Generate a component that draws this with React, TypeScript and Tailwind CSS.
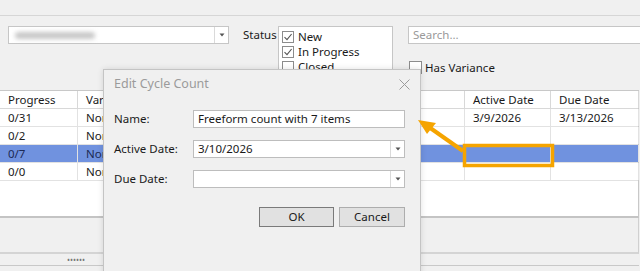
import React from "react";

const font = { fontFamily: '"Noto Sans", "Open Sans", sans-serif' };

function Check({ checked }: { checked: boolean }) {
  return (
    <span className="w-[12px] h-[12px] border border-[#8c8c8c] bg-white flex items-center justify-center shrink-0">
      {checked && (
        <svg width="10" height="10" viewBox="0 0 10 10">
          <path d="M1.5 5.2 L4 7.6 L8.6 2" fill="none" stroke="#555" strokeWidth="1.1" />
        </svg>
      )}
    </span>
  );
}

function Arrow() {
  return (
    <svg width="6" height="4" viewBox="0 0 6 4">
      <path d="M0.5 0.5 L5.5 0.5 L3 3.5 Z" fill="#555" />
    </svg>
  );
}

const cols = [
  { label: "Progress", w: 78 },
  { label: "Variance", w: 92 },
  { label: "Description", w: 140 },
  { label: "Created Date", w: 155 },
  { label: "Active Date", w: 86 },
  { label: "Due Date", w: 88 },
];

const rows = [
  ["0/31", "None", "", "", "3/9/2026", "3/13/2026"],
  ["0/2", "None", "", "", "", ""],
  ["0/7", "None", "", "", "", ""],
  ["0/0", "None", "", "", "", ""],
];

export default function App() {
  return (
    <div className="relative w-[640px] h-[271px] overflow-hidden bg-[#f0f0f0] text-[11.5px] text-[#1a1a1a]" style={font}>
      <div className="h-[16px] border-b border-[#d6d6d6]" />
      <div className="flex items-start pt-[10px] h-[74px] w-[640px] overflow-hidden">
        <div className="ml-[8px] w-[221px] shrink-0 h-[18px] bg-white border border-[#c6c6c6] flex items-center">
          <div className="ml-[6px] w-[80px] h-[7px] rounded-full bg-[#c8c8c8] blur-[2px]" />
          <div className="ml-auto w-[14px] h-full border-l border-[#dadada] flex items-center justify-center">
            <Arrow />
          </div>
        </div>
        <span className="ml-[14px] w-[35px] shrink-0 mt-[1px] leading-[16px]">Status</span>
        <div className="w-[115px] shrink-0 h-[60px] bg-white border border-[#c6c6c6] pl-[3px] pt-[2px] flex flex-col">
          <div className="flex items-center gap-[4px] h-[15px]"><Check checked /><span>New</span></div>
          <div className="flex items-center gap-[4px] h-[15px]"><Check checked /><span>In Progress</span></div>
          <div className="flex items-center gap-[4px] h-[15px]"><Check checked={false} /><span>Closed</span></div>
        </div>
        <div className="ml-[15px] shrink-0 flex flex-col">
          <div className="w-[240px] h-[18px] bg-white border border-[#c6c6c6] flex items-center pl-[4px] text-[#9a9a9a]">Search...</div>
          <div className="flex items-center gap-[3px] mt-[15px] ml-[1px]">
            <span className="w-[13px] h-[13px] border border-[#8c8c8c] bg-white" />
            <span>Has Variance</span>
          </div>
        </div>
      </div>
      <div className="w-[639px] h-[128px] bg-white border-b-[2px] border-[#c4c4c4] border-r border-r-[#c8c8c8] border-t border-t-[#c8c8c8]">
        <div className="flex h-[18px] border-b border-[#d8d8d8]">
          {cols.map((c) => (
            <div key={c.label} className="border-r border-[#d8d8d8] pl-[8px] flex items-center shrink-0" style={{ width: c.w }}>
              {c.label}
            </div>
          ))}
        </div>
        {rows.map((r, i) => (
          <div key={i} className={`flex h-[18px] border-b border-[#e2e2e2] ${i === 2 ? "bg-[#7092df] text-[#1c2a55]" : ""}`}>
            {r.map((v, j) => (
              <div key={j} className="border-r border-[#e2e2e2] pl-[8px] flex items-center shrink-0" style={{ width: cols[j].w }}>
                {v}
              </div>
            ))}
          </div>
        ))}
      </div>
      <div className="w-[639px] h-[36px] border-b-[2px] border-[#d4d4d4] border-r border-r-[#d0d0d0]" />
      <div className="w-[639px] h-[12px] border-b border-[#c8c8c8] flex items-center">
        <span className="ml-[67px] text-[8px] leading-[8px] text-[#777]">••••••</span>
      </div>

      {/* Dialog */}
      <div className="absolute left-[103px] top-[69px] w-[318px] h-[210px] bg-[#f0f0f0] border border-[#c4c4c4] shadow-[0_0_6px_rgba(0,0,0,0.12)]">
        <div className="flex items-center h-[28px] pl-[10px] pr-[10px] text-[12.5px] text-[#9b9b9b]">
          <span>Edit Cycle Count</span>
          <svg className="ml-auto" width="11" height="11" viewBox="0 0 11 11">
            <path d="M0.5 0.5 L10.5 10.5 M10.5 0.5 L0.5 10.5" stroke="#9b9b9b" strokeWidth="1" />
          </svg>
        </div>
        <div className="flex flex-col gap-[12px] mt-[12px] pl-[10px]">
          <div className="flex items-center h-[18px]">
            <span className="w-[79px]">Name:</span>
            <div className="w-[212px] h-[18px] bg-white border border-[#bdbdbd] flex items-center pl-[4px]">Freeform count with 7 items</div>
          </div>
          <div className="flex items-center h-[18px]">
            <span className="w-[79px]">Active Date:</span>
            <div className="w-[212px] h-[18px] bg-white border border-[#bdbdbd] flex items-center pl-[4px]">
              <span>3/10/2026</span>
              <div className="ml-auto w-[14px] h-full border-l border-[#dadada] flex items-center justify-center"><Arrow /></div>
            </div>
          </div>
          <div className="flex items-center h-[18px]">
            <span className="w-[79px]">Due Date:</span>
            <div className="w-[212px] h-[18px] bg-white border border-[#bdbdbd] flex items-center pl-[4px]">
              <div className="ml-auto w-[14px] h-full border-l border-[#dadada] flex items-center justify-center"><Arrow /></div>
            </div>
          </div>
        </div>
        <div className="flex justify-end gap-[5px] mt-[19px] pr-[15px]">
          <button className="w-[75px] h-[20px] bg-[#e1e1e1] border border-[#7a7a7a] flex items-center justify-center">OK</button>
          <button className="w-[66px] h-[20px] bg-[#e1e1e1] border border-[#adadad] flex items-center justify-center">Cancel</button>
        </div>
      </div>

      {/* Annotation */}
      <svg className="absolute left-0 top-0 pointer-events-none" width="640" height="271" viewBox="0 0 640 271">
        <rect x="464.5" y="145.5" width="88" height="20" fill="none" stroke="#f5a400" strokeWidth="3.5" />
        <line x1="463" y1="151" x2="426" y2="125" stroke="#f5a400" strokeWidth="4" />
        <path d="M418 120 L436 123 L427 134 Z" fill="#f5a400" />
      </svg>
    </div>
  );
}
